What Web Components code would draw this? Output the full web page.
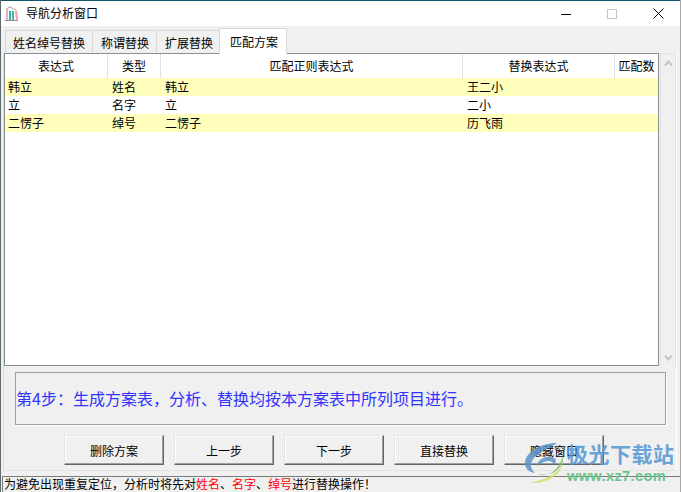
<!DOCTYPE html>
<html lang="zh">
<head>
<meta charset="utf-8">
<title>导航分析窗口</title>
<style>
html, body { margin: 0; padding: 0; }
body { width: 682px; height: 492px; overflow: hidden; background: #f0f0f0; font: 12px "Noto Sans CJK SC", sans-serif; color: #000; }
</style>
</head>
<body>
<nav-window></nav-window>

<script>
class TitleBar extends HTMLElement{
    constructor(){
        super();
        this.shadowDOM = this.attachShadow({mode: "open"});
        this.shadowDOM.innerHTML = `
        <style>
        :host { display: flex; align-items: center; height: 25px; background: #fff; border-top: 1px solid #10566e; padding-left: 3px; }
        svg { display: block; flex: none; }
        .name { margin-left: 6px; font-size: 12px; line-height: 23px; padding-bottom: 2px; flex: 1; }
        .btns { display: flex; align-items: center; margin-right: -1px; }
        .btn { width: 46px; height: 24px; display: flex; align-items: center; justify-content: center; }
        </style>
        <svg width="16" height="16" viewBox="0 0 16 16">
            <path d="M1 14.5h13" stroke="#a08088" stroke-width="1"/>
            <path d="M2 3h2v11H2z" fill="#dcb8c4"/>
            <path d="M5 5h2v9H5z" fill="#3aa7b5"/>
            <path d="M8 5h2v9H8z" fill="#4fb48e"/>
            <path d="M11 5l2-.5 1 9.500-2 .5z" fill="#e8a0b4"/>
            <path d="M2 3l4-2 6 3" fill="none" stroke="#b89aa2" stroke-width="1"/>
        </svg>
        <span class="name"><slot></slot></span>
        <div class="btns">
            <div class="btn"><svg width="10" height="10"><path d="M0 5.500h10" stroke="#000"/></svg></div>
            <div class="btn"><svg width="10" height="10"><rect x=".5" y=".5" width="9" height="9" fill="none" stroke="#c4c4c4"/></svg></div>
            <div class="btn"><svg width="11" height="11"><path d="M.5 .5l10 10M10.500 .5l-10 10" stroke="#000" stroke-width="1"/></svg></div>
        </div>
        `;
    }
}
customElements.define("title-bar", TitleBar);

class TabStrip extends HTMLElement{
    constructor(){
        super();
        this.shadowDOM = this.attachShadow({mode: "open"});
    }
    connectedCallback(){
        const tabs = this.getAttribute("tabs").split(",");
        const active = Number(this.getAttribute("active"));
        this.shadowDOM.innerHTML = `
        <style>
        :host { display: flex; align-items: flex-end; height: 27px; padding-left: 4px; }
        .tab { box-sizing: border-box; height: 23px; line-height: 24px; background: #f0f0f0; border: 1px solid #d9d9d9; border-bottom: 0; margin-right: -1px; font-size: 12px; white-space: nowrap; }
        .tab:nth-child(2) { padding: 0 7px; }
        .tab:nth-child(3) { padding: 0 7px 0 8px; }
        .tab:nth-child(4) { padding: 0 6px 0 8px; }
        .tab.on:nth-child(5) { padding: 0 8px 0 10px; }
        .on { background: #fff; line-height: 25px; position: relative; z-index: 1; margin-bottom: -1px; height: 26px; }
        </style>
        ` + tabs.map((t, i) => `<div class="tab ${i === active ? "on" : ""}">${t}</div>`).join("");
    }
}
customElements.define("tab-strip", TabStrip);

const COLS = "103px 53px 302px 152px 1fr";

class PlanRow extends HTMLElement{
    constructor(){
        super();
        this.shadowDOM = this.attachShadow({mode: "open"});
    }
    connectedCallback(){
        const cells = this.getAttribute("cells").split(",");
        this.shadowDOM.innerHTML = `
        <style>
        :host { display: grid; grid-template-columns: ${COLS}; height: 18px; line-height: 18px; font-size: 12px; }
        :host([odd]) { background: #ffffbb; }
        div { padding-left: 4px; white-space: nowrap; }
        div:first-of-type { padding-left: 3px; }
        </style>
        ` + cells.map(c => `<div>${c}</div>`).join("") + `<div></div>`;
    }
}
customElements.define("plan-row", PlanRow);

class PlanTable extends HTMLElement{
    constructor(){
        super();
        this.shadowDOM = this.attachShadow({mode: "open"});
    }
    connectedCallback(){
        const heads = this.getAttribute("heads").split(",");
        this.shadowDOM.innerHTML = `
        <style>
        :host { display: flex; gap: 1px; height: 313px; }
        .box { box-sizing: border-box; flex: none; width: 655px; height: 313px; background: #fff; border: 1px solid #8b8f94; }
        .head { display: grid; grid-template-columns: ${COLS}; height: 24px; line-height: 24px; font-size: 12px; }
        .head div { text-align: center; border-right: 1px solid #e2e2e2; box-sizing: border-box; white-space: nowrap; }
        .head div:last-child { border-right: 0; }
        .bar { box-sizing: border-box; flex: none; width: 16px; height: 313px; background: #f0f0f0; border: 1px solid #e2e2e2; border-bottom: 0; display: flex; flex-direction: column; justify-content: space-between; align-items: center; padding: 6px 0 5px; }
        svg { display: block; }
        </style>
        <div class="box">
            <div class="head">${heads.map(h => `<div>${h}</div>`).join("")}</div>
            <slot></slot>
        </div>
        <div class="bar">
            <svg width="9" height="7"><path d="M1 5.500l3.500-4 3.500 4" fill="none" stroke="#c4c4c4" stroke-width="2"/></svg>
            <svg width="9" height="7"><path d="M1 1.500l3.500 4 3.500-4" fill="none" stroke="#c4c4c4" stroke-width="2"/></svg>
        </div>
        `;
    }
}
customElements.define("plan-table", PlanTable);

class StepNote extends HTMLElement{
    constructor(){
        super();
        this.shadowDOM = this.attachShadow({mode: "open"});
        this.shadowDOM.innerHTML = `
        <style>
        :host { display: flex; align-items: center; box-sizing: border-box; width: 651px; height: 53px; margin: 6px 0 0 11px; border: 1px solid #a0a0a0; box-shadow: 1px 1px 0 #fff; padding: 0 0 2px 0; color: #3333ff; font-size: 16px; white-space: nowrap; }
        </style>
        <slot></slot>
        `;
    }
}
customElements.define("step-note", StepNote);

class PushBtn extends HTMLElement{
    constructor(){
        super();
        this.shadowDOM = this.attachShadow({mode: "open"});
        this.shadowDOM.innerHTML = `
        <style>
        :host { display: flex; align-items: center; justify-content: center; box-sizing: border-box; width: 100px; height: 30px; background: #f0f0f0; border: 1px solid; border-color: #e4e4e4 #646464 #646464 #e4e4e4; box-shadow: inset -1px -1px 0 #a0a0a0, inset 1px 1px 0 #fff; font-size: 12px; }
        </style>
        <slot></slot>
        `;
    }
}
customElements.define("push-btn", PushBtn);

class StatusBar extends HTMLElement{
    constructor(){
        super();
        this.shadowDOM = this.attachShadow({mode: "open"});
        this.shadowDOM.innerHTML = `
        <style>
        :host { display: block; box-sizing: border-box; height: 16px; margin-left: 1px; margin-top: 5px; border-top: 1px solid #7a7a7a; border-left: 1px solid #7a7a7a; padding-left: 1px; line-height: 14px; font-size: 12px; white-space: nowrap; }
        </style>
        <slot></slot>
        `;
    }
}
customElements.define("status-bar", StatusBar);

class XzMark extends HTMLElement{
    constructor(){
        super();
        this.shadowDOM = this.attachShadow({mode: "open"});
        this.shadowDOM.innerHTML = `
        <style>
        :host { display: block; position: absolute; left: 522px; top: 440px; width: 160px; height: 52px; pointer-events: none; }
        svg { position: absolute; left: 0; top: 2px; opacity: .85; }
        .cn { position: absolute; left: 44px; top: -2px; font-size: 21px; line-height: 30px; font-weight: 700; color: #5b9bd5; letter-spacing: .5px; opacity: .9; white-space: nowrap; }
        .en { position: absolute; left: 44px; top: 27px; font: 700 14.5px/18px "Liberation Sans", sans-serif; color: #6cc48e; letter-spacing: .4px; white-space: nowrap; }
        </style>
        <svg width="46" height="44" viewBox="0 0 46 44">
            <path d="M34 1C20 1 4 8 2 20c-1 6 4 10 10 11C7 27 6 20 13 14 20 8 28 5 34 1z" fill="#5b94c9"/>
            <path d="M14 24c0-6 8-10 15-9 5 1 5 6 1 8 1-4-5-5-9-3-3 1-5 3-7 4z" fill="#5b94c9"/>
            <path d="M40 14c1 8-5 16-13 18-4 1-9 0-12 0 8 3 19 0 25-18z" fill="#7cc46b"/>
            <path d="M41 17C39 30 26 37 6 41c14 1 33-5 35-24z" fill="#d6dc6a"/>
        </svg>
        <div class="cn">极光下载站</div>
        <div class="en">www.xz7.com</div>
        `;
    }
}
customElements.define("xz-mark", XzMark);

class NavWindow extends HTMLElement{
    constructor(){
        super();
        this.shadowDOM = this.attachShadow({mode: "open"});
        this.shadowDOM.innerHTML = `
        <style>
        :host { display: block; position: relative; box-sizing: border-box; width: 682px; height: 492px; background: #f0f0f0; overflow: hidden; border-left: 1px solid #5c6a70; border-right: 1px solid #fff; }
        .frame { height: 492px; border-right: 1px solid #a8a8a8; }
        .panel { box-sizing: border-box; width: 674px; height: 418px; margin-left: 2px; padding-bottom: 5px; border: 1px solid #fff; border-top: 0; border-left-color: #d8d8d8; border-bottom-color: #e4e4e4; }
        .btns { display: flex; gap: 10px; padding-left: 60px; margin-top: 10px; }
        .r { color: #ff0000; }
        </style>
        <div class="frame">
            <title-bar>导航分析窗口</title-bar>
            <tab-strip tabs="姓名绰号替换,称谓替换,扩展替换,匹配方案" active="3"></tab-strip>
            <div class="panel">
                <plan-table heads="表达式,类型,匹配正则表达式,替换表达式,匹配数">
                    <plan-row odd cells="韩立,姓名,韩立,王二小"></plan-row>
                    <plan-row cells="立,名字,立,二小"></plan-row>
                    <plan-row odd cells="二愣子,绰号,二愣子,历飞雨"></plan-row>
                </plan-table>
                <step-note>第4步：生成方案表，分析、替换均按本方案表中所列项目进行。</step-note>
                <div class="btns">
                    <push-btn>删除方案</push-btn>
                    <push-btn>上一步</push-btn>
                    <push-btn>下一步</push-btn>
                    <push-btn>直接替换</push-btn>
                    <push-btn>隐藏窗口</push-btn>
                </div>
            </div>
            <status-bar>为避免出现重复定位，分析时将先对<span class="r">姓名</span>、<span class="r">名字</span>、<span class="r">绰号</span>进行替换操作！</status-bar>
        </div>
        <xz-mark></xz-mark>
        `;
    }
}
customElements.define("nav-window", NavWindow);
</script>
</body>
</html>
